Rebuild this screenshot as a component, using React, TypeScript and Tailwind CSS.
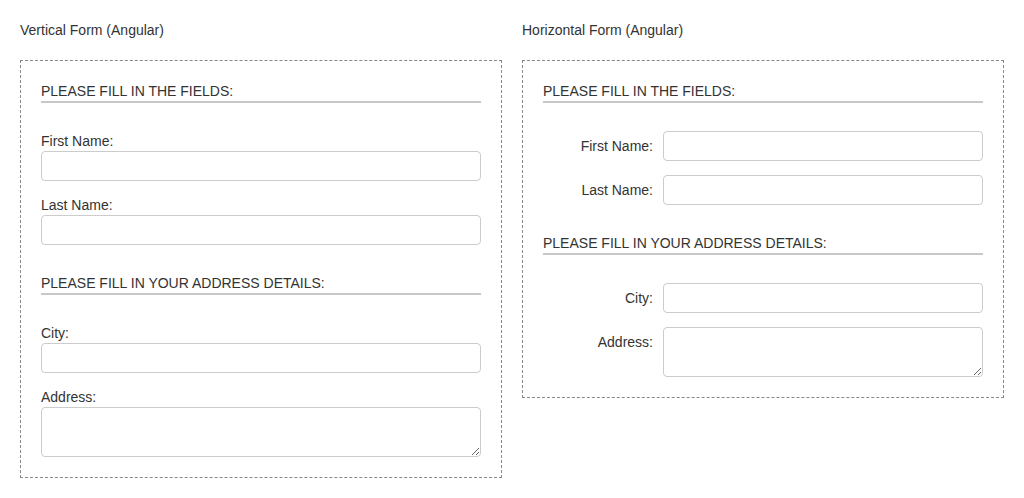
const font = { fontFamily: '"Liberation Sans", Arial, sans-serif' }

function Legend({ text }: { text: string }) {
  return (
    <div className="h-[22px] leading-5 border-b-2 border-[#c8c8c8] mb-[28px]">{text}</div>
  )
}

function VField({ label, area }: { label: string; area?: boolean }) {
  return (
    <div className="flex flex-col">
      <label className="leading-5">{label}</label>
      {area ? (
        <textarea className="h-[50px] border border-[#cccccc] rounded-[4px] bg-white" />
      ) : (
        <input className="h-[30px] border border-[#cccccc] rounded-[4px] bg-white" />
      )}
    </div>
  )
}

function HField({ label, area }: { label: string; area?: boolean }) {
  return (
    <div className="flex gap-[10px]">
      <label className="w-[110px] shrink-0 text-right leading-5 pt-[5px]">{label}</label>
      {area ? (
        <textarea className="flex-1 h-[50px] border border-[#cccccc] rounded-[4px] bg-white" />
      ) : (
        <input className="flex-1 h-[30px] border border-[#cccccc] rounded-[4px] bg-white" />
      )}
    </div>
  )
}

export default function App() {
  return (
    <div className="bg-white text-[#333333] text-[14px] p-5 grid grid-cols-2 gap-5 items-start" style={font}>
      {/* Vertical */}
      <div>
        <h2 className="leading-5 mb-5">Vertical Form (Angular)</h2>
        <div className="border border-dashed border-[#888888] p-5">
          <Legend text="PLEASE FILL IN THE FIELDS:" />
          <div className="flex flex-col gap-[14px]">
            <VField label="First Name:" />
            <VField label="Last Name:" />
          </div>
          <div className="mt-[28px]">
            <Legend text="PLEASE FILL IN YOUR ADDRESS DETAILS:" />
          </div>
          <div className="flex flex-col gap-[14px]">
            <VField label="City:" />
            <VField label="Address:" area />
          </div>
        </div>
      </div>

      {/* Horizontal */}
      <div>
        <h2 className="leading-5 mb-5">Horizontal Form (Angular)</h2>
        <div className="border border-dashed border-[#888888] p-5">
          <Legend text="PLEASE FILL IN THE FIELDS:" />
          <div className="flex flex-col gap-[14px]">
            <HField label="First Name:" />
            <HField label="Last Name:" />
          </div>
          <div className="mt-[28px]">
            <Legend text="PLEASE FILL IN YOUR ADDRESS DETAILS:" />
          </div>
          <div className="flex flex-col gap-[14px]">
            <HField label="City:" />
            <HField label="Address:" area />
          </div>
        </div>
      </div>
    </div>
  )
}
